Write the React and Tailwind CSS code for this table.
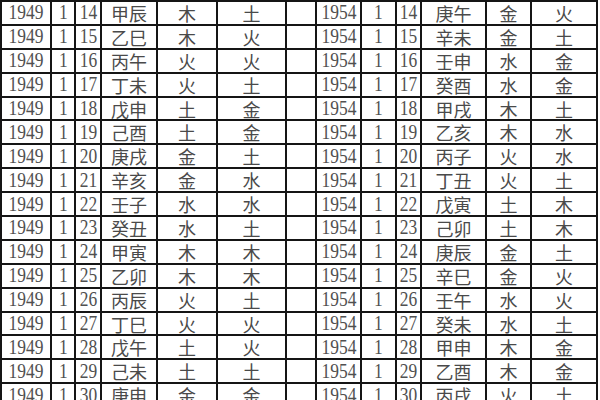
const left = [
  ["14", "甲辰", "木", "土"],
  ["15", "乙巳", "木", "火"],
  ["16", "丙午", "火", "火"],
  ["17", "丁未", "火", "土"],
  ["18", "戊申", "土", "金"],
  ["19", "己酉", "土", "金"],
  ["20", "庚戌", "金", "土"],
  ["21", "辛亥", "金", "水"],
  ["22", "壬子", "水", "水"],
  ["23", "癸丑", "水", "土"],
  ["24", "甲寅", "木", "木"],
  ["25", "乙卯", "木", "木"],
  ["26", "丙辰", "火", "土"],
  ["27", "丁巳", "火", "火"],
  ["28", "戊午", "土", "火"],
  ["29", "己未", "土", "土"],
  ["30", "庚申", "金", "金"],
];

const right = [
  ["14", "庚午", "金", "火"],
  ["15", "辛未", "金", "土"],
  ["16", "壬申", "水", "金"],
  ["17", "癸酉", "水", "金"],
  ["18", "甲戌", "木", "土"],
  ["19", "乙亥", "木", "水"],
  ["20", "丙子", "火", "水"],
  ["21", "丁丑", "火", "土"],
  ["22", "戊寅", "土", "木"],
  ["23", "己卯", "土", "木"],
  ["24", "庚辰", "金", "土"],
  ["25", "辛巳", "金", "火"],
  ["26", "壬午", "水", "火"],
  ["27", "癸未", "水", "土"],
  ["28", "甲申", "木", "金"],
  ["29", "乙酉", "木", "金"],
  ["30", "丙戌", "火", "土"],
];

const cell = "border-r-2 border-b-2 border-[#151515] flex items-center justify-center";

function Num({ children }) {
  return (
    <div className={cell}>
      <span className="inline-block scale-x-[0.83] text-[21px] leading-none text-[#505050] font-['Liberation_Serif',serif]">
        {children}
      </span>
    </div>
  );
}

function Han({ children }) {
  return (
    <div className={cell}>
      <span className="text-[18px] leading-none text-[#4a4a4a] font-['Noto_Sans_CJK_TC','Noto_Sans_CJK_SC',sans-serif]">
        {children}
      </span>
    </div>
  );
}

export default function App() {
  return (
    <div className="w-[600px] h-[400px] overflow-hidden bg-white">
      <div className="grid grid-cols-[50px_24px_26px_56px_60px_69px_30px_45px_35px_25px_65px_45px_66px] auto-rows-[23.9px] border-l-2 border-t-2 border-[#151515] w-[598px]">
        {left.map((r, i) => {
          const q = right[i];
          return [
            <Num key={"a" + i}>1949</Num>,
            <Num key={"b" + i}>1</Num>,
            <Num key={"c" + i}>{r[0]}</Num>,
            <Han key={"d" + i}>{r[1]}</Han>,
            <Han key={"e" + i}>{r[2]}</Han>,
            <Han key={"f" + i}>{r[3]}</Han>,
            <div key={"g" + i} className={cell}></div>,
            <Num key={"h" + i}>1954</Num>,
            <Num key={"i" + i}>1</Num>,
            <Num key={"j" + i}>{q[0]}</Num>,
            <Han key={"k" + i}>{q[1]}</Han>,
            <Han key={"l" + i}>{q[2]}</Han>,
            <Han key={"m" + i}>{q[3]}</Han>,
          ];
        })}
      </div>
    </div>
  );
}
